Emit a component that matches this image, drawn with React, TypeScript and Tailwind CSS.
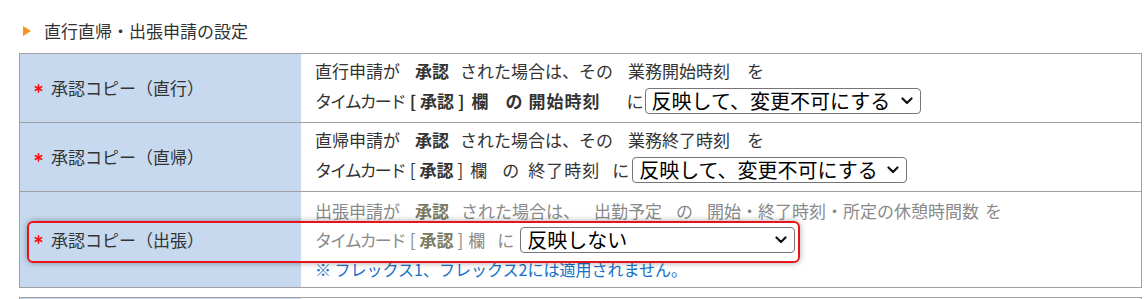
import React from 'react';

const Chevron: React.FC = () => (
  <svg width="12" height="8" viewBox="0 0 12 8" className="absolute right-[8px] top-1/2 -translate-y-1/2 pointer-events-none">
    <polyline points="1.5,1.5 6,6 10.5,1.5" fill="none" stroke="#111" strokeWidth="2.2" strokeLinecap="round" strokeLinejoin="round" />
  </svg>
);

const Select: React.FC<{ value: string; width: string }> = ({ value, width }) => (
  <div className={`relative h-[26px] shrink-0 ${width}`}>
    <select
      defaultValue={value}
      className="appearance-none w-full h-full border border-[#767676] rounded-[4px] bg-white pl-[6px] pr-[24px] text-[20px] leading-[22px] text-black outline-none"
    >
      <option>{value}</option>
    </select>
    <Chevron />
  </div>
);

const Asterisk: React.FC = () => (
  <svg width="9" height="9" viewBox="0 0 10 10" className="shrink-0">
    <g stroke="#ff1010" strokeWidth="1.8" strokeLinecap="round">
      <line x1="5" y1="1" x2="5" y2="9" />
      <line x1="1.5" y1="3" x2="8.5" y2="7" />
      <line x1="1.5" y1="7" x2="8.5" y2="3" />
    </g>
  </svg>
);

const Label: React.FC<{ text: string }> = ({ text }) => (
  <div className="bg-[#c6d9ee] flex items-center pl-[14px]">
    <Asterisk />
    <span className="ml-[8px] text-[17px] text-[#333]">{text}</span>
  </div>
);

const Bracket: React.FC<{ bold?: boolean; strong?: string }> = ({ bold, strong }) => (
  <span className={`ml-[5px] ${bold ? 'font-bold' : ''}`}>
    [<span className={`mx-[4px] font-bold ${strong ?? ''}`}>承認</span>]
  </span>
);

export default function App() {
  return (
    <div
      className="relative w-[1148px] h-[299px] overflow-hidden bg-white text-[#333]"
      style={{ fontFamily: '"Noto Sans CJK JP", "Noto Sans", sans-serif' }}
    >
      {/* section heading */}
      <div className="flex items-center h-[24px] mt-[19px] ml-[23px]">
        <span className="w-0 h-0 border-y-[5px] border-y-transparent border-l-[8px] border-l-[#f7941d]" />
        <span className="ml-[13px] text-[17px] text-[#333]">直行直帰・出張申請の設定</span>
      </div>

      {/* settings table */}
      <div className="mt-[10px] ml-[19px] w-[1123px] border border-[#a0a0a0]">
        {/* row 1 */}
        <div className="grid grid-cols-[281px_1fr] h-[68px]">
          <Label text="承認コピー（直行）" />
          <div className="pl-[14px] pt-[3px] text-[17px]">
            <div className="h-[28px] flex items-center whitespace-nowrap">
              <span>直行申請が</span>
              <span className="ml-[15px] font-bold">承認</span>
              <span className="ml-[11px]">された場合は、その</span>
              <span className="ml-[15px]">業務開始時刻</span>
              <span className="ml-[17px]">を</span>
            </div>
            <div className="h-[32px] flex items-center whitespace-nowrap">
              <span className="tracking-[-2px]">タイムカード</span>
              <Bracket bold />
              <span className="ml-[7px] font-bold">欄</span>
              <span className="ml-[17px] font-bold">の</span>
              <span className="ml-[6px] font-bold tracking-[1px]">開始時刻</span>
              <span className="ml-[26px]">に</span>
              <span className="ml-[1px]" />
              <Select value="反映して、変更不可にする" width="w-[276px]" />
            </div>
          </div>
        </div>

        {/* row 2 */}
        <div className="grid grid-cols-[281px_1fr] h-[69px] border-t border-[#a0a0a0]">
          <Label text="承認コピー（直帰）" />
          <div className="pl-[14px] pt-[3px] text-[17px]">
            <div className="h-[28px] flex items-center whitespace-nowrap">
              <span>直帰申請が</span>
              <span className="ml-[15px] font-bold">承認</span>
              <span className="ml-[11px]">された場合は、その</span>
              <span className="ml-[15px]">業務終了時刻</span>
              <span className="ml-[17px]">を</span>
            </div>
            <div className="h-[32px] flex items-center whitespace-nowrap">
              <span className="tracking-[-2px]">タイムカード</span>
              <Bracket />
              <span className="ml-[7px]">欄</span>
              <span className="ml-[15px]">の</span>
              <span className="ml-[9px] tracking-[1px]">終了時刻</span>
              <span className="ml-[12px]">に</span>
              <span className="ml-[3px]" />
              <Select value="反映して、変更不可にする" width="w-[275px]" />
            </div>
          </div>
        </div>

        {/* row 3 */}
        <div className="grid grid-cols-[281px_1fr] h-[96px] border-t border-[#a0a0a0]">
          <Label text="承認コピー（出張）" />
          <div className="pl-[14px] pt-[5px] text-[17px] text-[#8a8a8a]">
            <div className="h-[28px] flex items-center whitespace-nowrap">
              <span>出張申請が</span>
              <span className="ml-[15px] font-bold text-[#7a7a62]">承認</span>
              <span className="ml-[12px]">された場合は、</span>
              <span className="ml-[14px]">出勤予定</span>
              <span className="ml-[14px]">の</span>
              <span className="ml-[14px]">開始・終了時刻・所定の休憩時間数</span>
              <span className="ml-[6px]">を</span>
            </div>
            <div className="h-[30px] flex items-center whitespace-nowrap">
              <span className="tracking-[-2px]">タイムカード</span>
              <Bracket strong="text-[#7a7a62]" />
              <span className="ml-[5px]">欄</span>
              <span className="ml-[12px]">に</span>
              <span className="ml-[6px]" />
              <Select value="反映しない" width="w-[275px]" />
            </div>
            <div className="h-[28px] flex items-center whitespace-nowrap text-[16px] text-[#1570c8]">
              ※ フレックス1、フレックス2には適用されません。
            </div>
          </div>
        </div>
      </div>

      {/* next table (cut off) */}
      <div className="mt-[9px] ml-[19px] w-[1123px] h-[40px] border border-[#a0a0a0] grid grid-cols-[281px_1fr]">
        <div className="bg-[#c6d9ee]" />
        <div />
      </div>

      {/* red highlight overlay */}
      <div className="absolute left-[27px] top-[221px] w-[773px] h-[42px] border-2 border-[#e8141b] rounded-[6px] shadow-[0_0_6px_rgba(0,0,0,0.35)] pointer-events-none" />
    </div>
  );
}
